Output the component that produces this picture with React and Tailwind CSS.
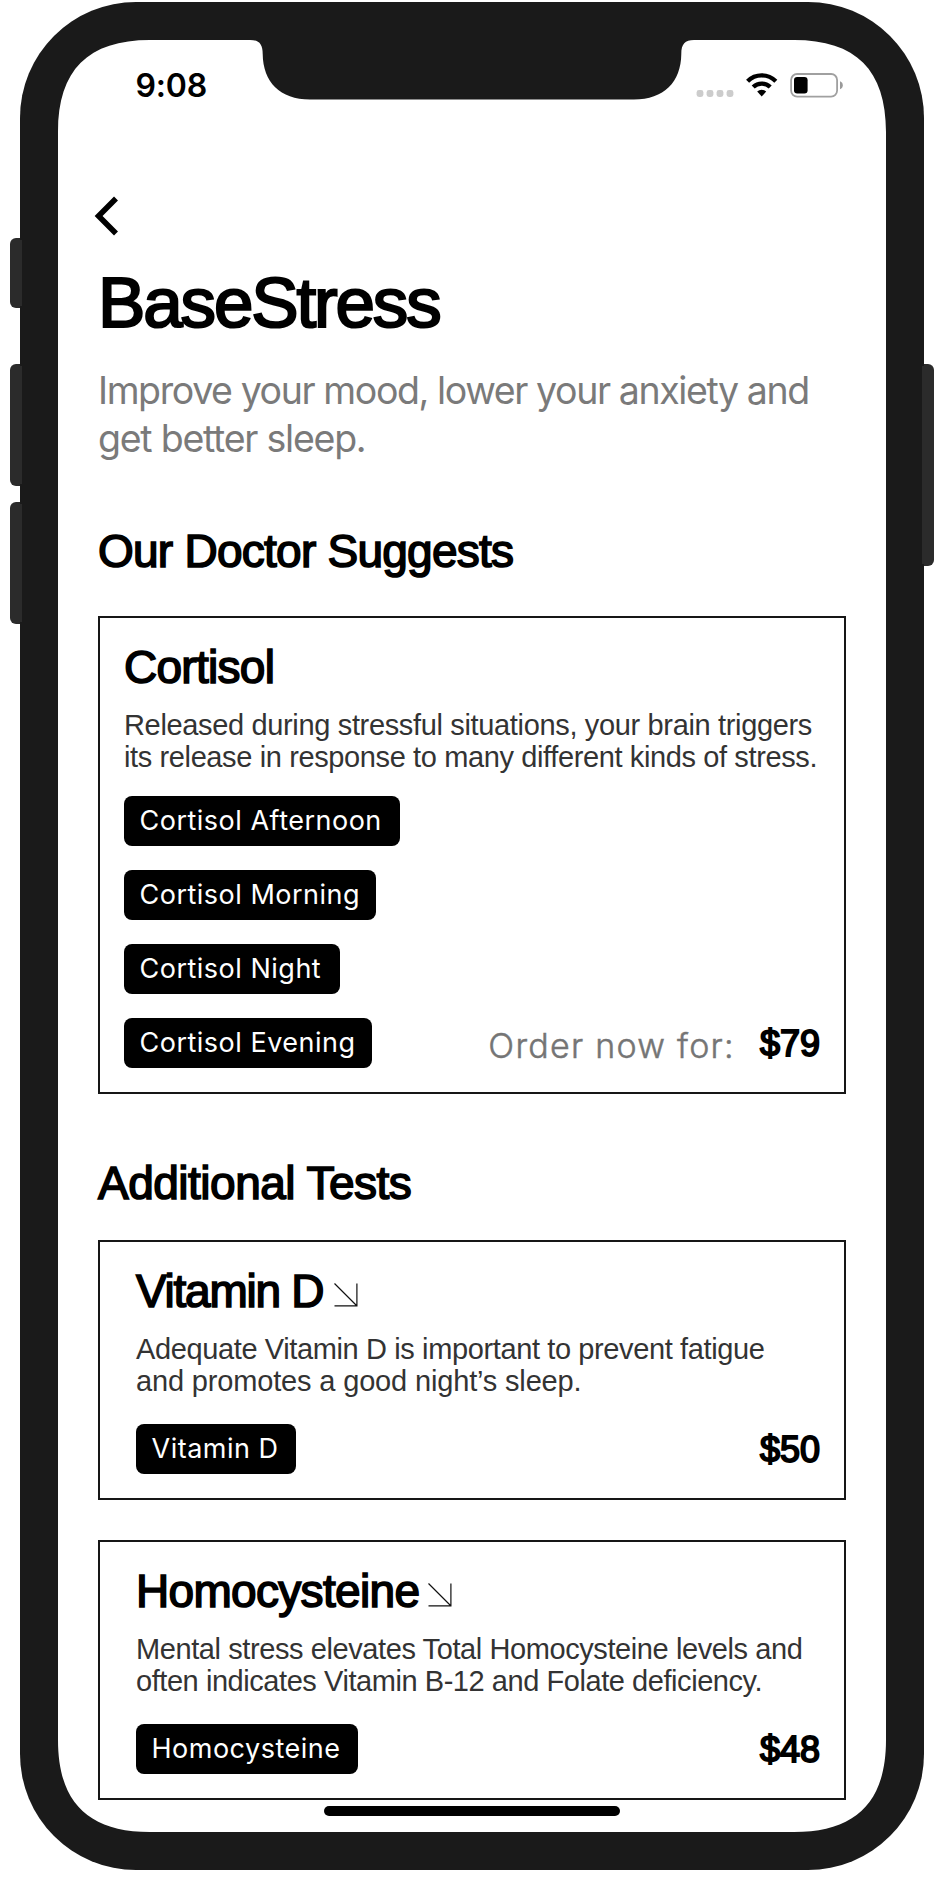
import React from "react";

const sans = "font-['Liberation_Sans',Arial,sans-serif]";
const inter = "font-['Inter',sans-serif]";
const heading = "pt-px -mb-px text-[46px] leading-[60px] text-black [-webkit-text-stroke:1.6px_black] whitespace-nowrap";

function PhoneFrame() {
  return (
    <svg className="absolute inset-0" width="944" height="1882" viewBox="0 0 944 1882" aria-hidden="true">
      <g fill="#2b2b2b">
        <rect x="10" y="238" width="20" height="70" rx="6" />
        <rect x="10" y="364" width="20" height="122" rx="6" />
        <rect x="10" y="502" width="20" height="122" rx="6" />
        <rect x="914" y="364" width="20" height="202" rx="6" />
      </g>
      <rect x="20" y="2" width="904" height="1868" rx="116" fill="#1a1a1a" />
      <g fill="#2b2b2b">
        <rect x="20" y="240" width="2" height="66" />
        <rect x="20" y="366" width="2" height="118" />
        <rect x="20" y="504" width="2" height="118" />
        <rect x="922" y="366" width="2" height="198" />
      </g>
      <path
        fill="#fff"
        d="M58 132C58 70 88 40 150 40H250C259 40 262.7 44 262.7 54C263 82 280 99.5 310 99.5H634C664 99.5 681 82 681.3 54C681.3 44 685 40 694 40H794C856 40 886 70 886 132V1740C886 1802 856 1832 794 1832H150C88 1832 58 1802 58 1740Z"
      />
    </svg>
  );
}

function StatusIcons() {
  return (
    <svg width="148" height="30" viewBox="0 0 148 30" aria-label="Signal, Wi-Fi and battery">
      <g fill="#cccccc">
        <rect x="0.6" y="20" width="6.8" height="7" rx="2.4" />
        <rect x="10.6" y="20" width="6.8" height="7" rx="2.4" />
        <rect x="20.6" y="20" width="6.8" height="7" rx="2.4" />
        <rect x="30.6" y="20" width="6.8" height="7" rx="2.4" />
      </g>
      <g fill="none" stroke="#000" strokeWidth="4.3">
        <path d="M51.6 11.2A20 20 0 0 1 79.8 11.2" />
        <path d="M57.2 17A12.2 12.2 0 0 1 74.2 17" />
      </g>
      <path d="M61.2 21.6A6.6 6.6 0 0 1 70.2 21.6L65.7 26.6Z" fill="#000" />
      <rect x="95.1" y="4" width="46" height="22.6" rx="6" fill="none" stroke="#a0a0a0" strokeWidth="1.8" />
      <rect x="98" y="7" width="13.6" height="16.4" rx="3.2" fill="#000" />
      <path d="M144 11.2C146 11.9 146.8 13.4 146.8 15.2S146 18.5 144 19.2Z" fill="#9a9a9a" />
    </svg>
  );
}

function ArrowDownRight({ className }) {
  return (
    <svg className={"mt-[9px] shrink-0 " + className} width="24" height="24" viewBox="0 0 24 24" fill="none" stroke="#111" strokeWidth="1.2">
      <path d="M0.5 0.5L23 23M22.9 0.5V22.9H0.5" />
    </svg>
  );
}

function Badge({ children, className }) {
  return (
    <span className={inter + " flex h-[50px] items-center whitespace-nowrap rounded-lg bg-black pl-[15.5px] text-[27px] leading-[50px] tracking-[0.5px] text-white " + className}>
      {children}
    </span>
  );
}

function Price({ children }) {
  return (
    <span className={sans + " -mb-px pt-px text-[36px] leading-[50px] text-black [-webkit-text-stroke:1.9px_black]"}>{children}</span>
  );
}

function Description({ lines }) {
  return (
    <p className={sans + " -mb-px mt-3 whitespace-nowrap pt-px text-[29px] leading-8 text-[#333333]"}>
      {lines.map((line) => (
        <span key={line.text} className={"block " + line.spacing}>{line.text}</span>
      ))}
    </p>
  );
}

function TestCard({ title, titleClass, arrowClass, lines, badge, badgeClass, price }) {
  return (
    <article className="h-[260px] w-[748px] border-2 border-[#161616] pl-9 pr-6 pt-[18px]">
      <div className="flex h-[60px] items-center">
        <h3 className={sans + " " + heading + " " + titleClass}>{title}</h3>
        <ArrowDownRight className={arrowClass} />
      </div>
      <Description lines={lines} />
      <div className="mt-7 flex items-end justify-between">
        <Badge className={badgeClass}>{badge}</Badge>
        <Price>{price}</Price>
      </div>
    </article>
  );
}

export default function App() {
  return (
    <div className="relative h-[1882px] w-[944px] overflow-hidden bg-white">
      <PhoneFrame />
      <main className="relative px-[98px] pt-[60px]">
        <header className="ml-[37.5px] mr-[2px] flex h-[50px] items-center justify-between">
          <time className={inter + " pt-[2px] text-[32px] font-semibold leading-[50px] tracking-[-0.2px] text-black"}>9:08</time>
          <StatusIcons />
        </header>

        <button type="button" aria-label="Back" className="-ml-[4.5px] mt-[85px] block h-[42px] w-[26px]">
          <svg width="26" height="42" viewBox="0 0 26 42" fill="none" stroke="#000" strokeWidth="5.6">
            <path d="M22 3.6L4.6 21L22 38.4" />
          </svg>
        </button>

        <h1 className={sans + " -mb-px mt-[25px] whitespace-nowrap pt-px text-[71px] leading-[80px] tracking-[-2.15px] text-black [-webkit-text-stroke:2.2px_black]"}>
          BaseStress
        </h1>
        <p className={inter + " -mb-px mt-6 whitespace-nowrap pt-px text-[37.5px] leading-[48px] text-[#7a7a7a]"}>
          <span className="block tracking-[-1.4px]">Improve your mood, lower your anxiety and</span>
          <span className="block tracking-[-1.25px]">get better sleep.</span>
        </p>

        <h2 className={sans + " mt-[58px] tracking-[-0.75px] " + heading}>Our Doctor Suggests</h2>
        <article className="mt-9 h-[478px] w-[748px] border-2 border-[#161616] pl-6 pr-6 pt-[18px]">
          <h3 className={sans + " tracking-[-0.72px] " + heading}>Cortisol</h3>
          <Description
            lines={[
              { text: "Released during stressful situations, your brain triggers", spacing: "tracking-[-0.345px]" },
              { text: "its release in response to many different kinds of stress.", spacing: "tracking-[-0.38px]" },
            ]}
          />
          <div className="mt-6 flex items-end justify-between">
            <div className="flex flex-col gap-6">
              <Badge className="w-[276px]">Cortisol Afternoon</Badge>
              <Badge className="w-[252px]">Cortisol Morning</Badge>
              <Badge className="w-[216px]">Cortisol Night</Badge>
              <Badge className="w-[248px]">Cortisol Evening</Badge>
            </div>
            <div className="flex items-end gap-[25px]">
              <span className={inter + " -mb-px text-[34px] font-light leading-[46px] tracking-[1.25px] text-[#757575] [-webkit-text-stroke:0.5px_#757575]"}>Order now for:</span>
              <Price>$79</Price>
            </div>
          </div>
        </article>

        <h2 className={sans + " mt-[58px] tracking-[-0.5px] " + heading}>Additional Tests</h2>
        <div className="mt-7 flex flex-col gap-10">
          <TestCard
            title="Vitamin D"
            titleClass="tracking-[-1.25px]"
            arrowClass="ml-[11px]"
            lines={[
              { text: "Adequate Vitamin D is important to prevent fatigue", spacing: "tracking-[-0.38px]" },
              { text: "and promotes a good night’s sleep.", spacing: "tracking-[-0.16px]" },
            ]}
            badge="Vitamin D"
            badgeClass="w-[160px]"
            price="$50"
          />
          <TestCard
            title="Homocysteine"
            titleClass="tracking-[-0.68px]"
            arrowClass="ml-[9px]"
            lines={[
              { text: "Mental stress elevates Total Homocysteine levels and", spacing: "tracking-[-0.41px]" },
              { text: "often indicates Vitamin B-12 and Folate deficiency.", spacing: "tracking-[-0.44px]" },
            ]}
            badge="Homocysteine"
            badgeClass="w-[222px]"
            price="$48"
          />
        </div>
        <div className="mx-auto mt-1.5 h-2.5 w-[296px] rounded-full bg-black" />
      </main>
    </div>
  );
}
